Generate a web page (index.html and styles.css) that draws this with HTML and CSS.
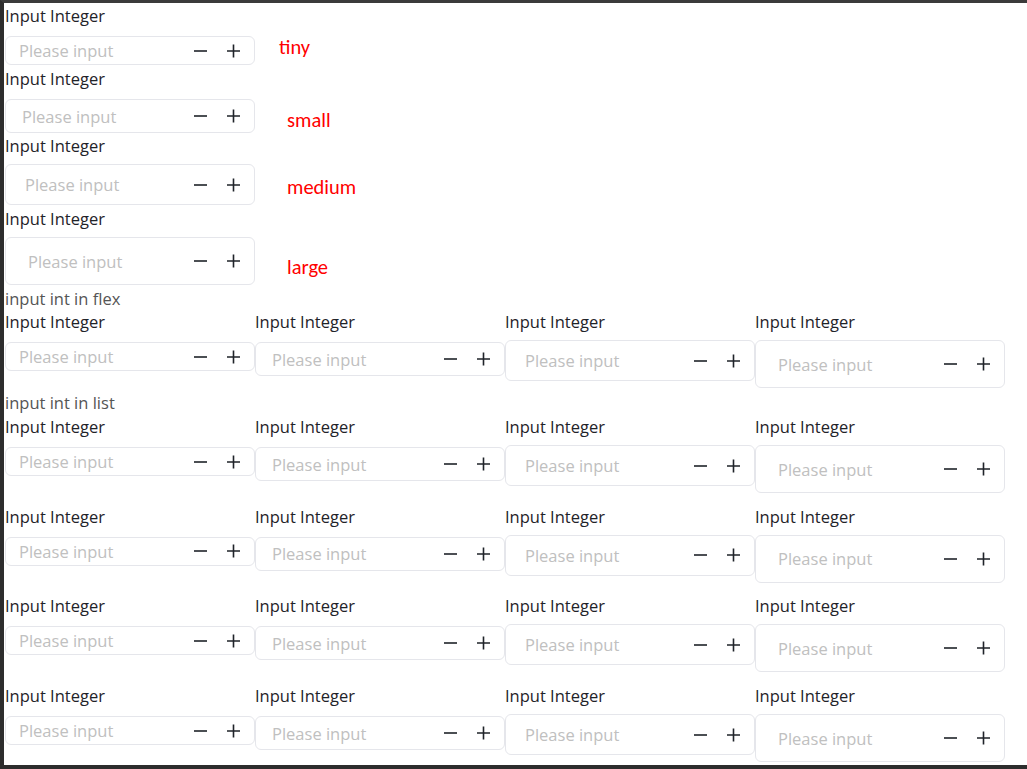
FILE: index.html
```html
<!DOCTYPE html>
<html lang="en">
<head>
    <meta charset="UTF-8">
    <meta name="viewport" content="width=device-width, initial-scale=1.0">
    <title>Input Integer</title>
    <link rel="stylesheet" href="styles.css">
</head>
<body>
<div class="page">

    <div class="stack-row first">
        <div class="field">
            <label class="field-label">Input Integer</label>
            <div class="int-input tiny">
                <input type="text" placeholder="Please input">
                <span class="steps">
                    <svg viewBox="0 0 14 14"><path d="M0.5 7h13"/></svg>
                    <svg viewBox="0 0 14 14"><path d="M7 0.5v13M0.5 7h13"/></svg>
                </span>
            </div>
        </div>
        <span class="size-note note-tiny">tiny</span>
    </div>

    <div class="stack-row second">
        <div class="field">
            <label class="field-label">Input Integer</label>
            <div class="int-input small">
                <input type="text" placeholder="Please input">
                <span class="steps">
                    <svg viewBox="0 0 14 14"><path d="M0.5 7h13"/></svg>
                    <svg viewBox="0 0 14 14"><path d="M7 0.5v13M0.5 7h13"/></svg>
                </span>
            </div>
        </div>
        <span class="size-note note-small">small</span>
    </div>

    <div class="stack-row">
        <div class="field">
            <label class="field-label">Input Integer</label>
            <div class="int-input medium">
                <input type="text" placeholder="Please input">
                <span class="steps">
                    <svg viewBox="0 0 14 14"><path d="M0.5 7h13"/></svg>
                    <svg viewBox="0 0 14 14"><path d="M7 0.5v13M0.5 7h13"/></svg>
                </span>
            </div>
        </div>
        <span class="size-note note-medium">medium</span>
    </div>

    <div class="stack-row">
        <div class="field">
            <label class="field-label">Input Integer</label>
            <div class="int-input large">
                <input type="text" placeholder="Please input">
                <span class="steps">
                    <svg viewBox="0 0 14 14"><path d="M0.5 7h13"/></svg>
                    <svg viewBox="0 0 14 14"><path d="M7 0.5v13M0.5 7h13"/></svg>
                </span>
            </div>
        </div>
        <span class="size-note note-large">large</span>
    </div>

    <div class="section-title">input int in flex</div>
    <div class="int-row flex-row">
        <div class="field">
            <label class="field-label">Input Integer</label>
            <div class="int-input tiny">
                <input type="text" placeholder="Please input">
                <span class="steps">
                    <svg viewBox="0 0 14 14"><path d="M0.5 7h13"/></svg>
                    <svg viewBox="0 0 14 14"><path d="M7 0.5v13M0.5 7h13"/></svg>
                </span>
            </div>
        </div>
        <div class="field">
            <label class="field-label">Input Integer</label>
            <div class="int-input small">
                <input type="text" placeholder="Please input">
                <span class="steps">
                    <svg viewBox="0 0 14 14"><path d="M0.5 7h13"/></svg>
                    <svg viewBox="0 0 14 14"><path d="M7 0.5v13M0.5 7h13"/></svg>
                </span>
            </div>
        </div>
        <div class="field">
            <label class="field-label">Input Integer</label>
            <div class="int-input medium">
                <input type="text" placeholder="Please input">
                <span class="steps">
                    <svg viewBox="0 0 14 14"><path d="M0.5 7h13"/></svg>
                    <svg viewBox="0 0 14 14"><path d="M7 0.5v13M0.5 7h13"/></svg>
                </span>
            </div>
        </div>
        <div class="field">
            <label class="field-label">Input Integer</label>
            <div class="int-input large">
                <input type="text" placeholder="Please input">
                <span class="steps">
                    <svg viewBox="0 0 14 14"><path d="M0.5 7h13"/></svg>
                    <svg viewBox="0 0 14 14"><path d="M7 0.5v13M0.5 7h13"/></svg>
                </span>
            </div>
        </div>
    </div>

    <div class="section-title">input int in list</div>
    <div class="int-list">
        <div class="int-row">
            <div class="field">
                <label class="field-label">Input Integer</label>
                <div class="int-input tiny">
                    <input type="text" placeholder="Please input">
                    <span class="steps">
                        <svg viewBox="0 0 14 14"><path d="M0.5 7h13"/></svg>
                        <svg viewBox="0 0 14 14"><path d="M7 0.5v13M0.5 7h13"/></svg>
                    </span>
                </div>
            </div>
            <div class="field">
                <label class="field-label">Input Integer</label>
                <div class="int-input small">
                    <input type="text" placeholder="Please input">
                    <span class="steps">
                        <svg viewBox="0 0 14 14"><path d="M0.5 7h13"/></svg>
                        <svg viewBox="0 0 14 14"><path d="M7 0.5v13M0.5 7h13"/></svg>
                    </span>
                </div>
            </div>
            <div class="field">
                <label class="field-label">Input Integer</label>
                <div class="int-input medium">
                    <input type="text" placeholder="Please input">
                    <span class="steps">
                        <svg viewBox="0 0 14 14"><path d="M0.5 7h13"/></svg>
                        <svg viewBox="0 0 14 14"><path d="M7 0.5v13M0.5 7h13"/></svg>
                    </span>
                </div>
            </div>
            <div class="field">
                <label class="field-label">Input Integer</label>
                <div class="int-input large">
                    <input type="text" placeholder="Please input">
                    <span class="steps">
                        <svg viewBox="0 0 14 14"><path d="M0.5 7h13"/></svg>
                        <svg viewBox="0 0 14 14"><path d="M7 0.5v13M0.5 7h13"/></svg>
                    </span>
                </div>
            </div>
        </div>

        <div class="int-row">
            <div class="field">
                <label class="field-label">Input Integer</label>
                <div class="int-input tiny">
                    <input type="text" placeholder="Please input">
                    <span class="steps">
                        <svg viewBox="0 0 14 14"><path d="M0.5 7h13"/></svg>
                        <svg viewBox="0 0 14 14"><path d="M7 0.5v13M0.5 7h13"/></svg>
                    </span>
                </div>
            </div>
            <div class="field">
                <label class="field-label">Input Integer</label>
                <div class="int-input small">
                    <input type="text" placeholder="Please input">
                    <span class="steps">
                        <svg viewBox="0 0 14 14"><path d="M0.5 7h13"/></svg>
                        <svg viewBox="0 0 14 14"><path d="M7 0.5v13M0.5 7h13"/></svg>
                    </span>
                </div>
            </div>
            <div class="field">
                <label class="field-label">Input Integer</label>
                <div class="int-input medium">
                    <input type="text" placeholder="Please input">
                    <span class="steps">
                        <svg viewBox="0 0 14 14"><path d="M0.5 7h13"/></svg>
                        <svg viewBox="0 0 14 14"><path d="M7 0.5v13M0.5 7h13"/></svg>
                    </span>
                </div>
            </div>
            <div class="field">
                <label class="field-label">Input Integer</label>
                <div class="int-input large">
                    <input type="text" placeholder="Please input">
                    <span class="steps">
                        <svg viewBox="0 0 14 14"><path d="M0.5 7h13"/></svg>
                        <svg viewBox="0 0 14 14"><path d="M7 0.5v13M0.5 7h13"/></svg>
                    </span>
                </div>
            </div>
        </div>

        <div class="int-row">
            <div class="field">
                <label class="field-label">Input Integer</label>
                <div class="int-input tiny">
                    <input type="text" placeholder="Please input">
                    <span class="steps">
                        <svg viewBox="0 0 14 14"><path d="M0.5 7h13"/></svg>
                        <svg viewBox="0 0 14 14"><path d="M7 0.5v13M0.5 7h13"/></svg>
                    </span>
                </div>
            </div>
            <div class="field">
                <label class="field-label">Input Integer</label>
                <div class="int-input small">
                    <input type="text" placeholder="Please input">
                    <span class="steps">
                        <svg viewBox="0 0 14 14"><path d="M0.5 7h13"/></svg>
                        <svg viewBox="0 0 14 14"><path d="M7 0.5v13M0.5 7h13"/></svg>
                    </span>
                </div>
            </div>
            <div class="field">
                <label class="field-label">Input Integer</label>
                <div class="int-input medium">
                    <input type="text" placeholder="Please input">
                    <span class="steps">
                        <svg viewBox="0 0 14 14"><path d="M0.5 7h13"/></svg>
                        <svg viewBox="0 0 14 14"><path d="M7 0.5v13M0.5 7h13"/></svg>
                    </span>
                </div>
            </div>
            <div class="field">
                <label class="field-label">Input Integer</label>
                <div class="int-input large">
                    <input type="text" placeholder="Please input">
                    <span class="steps">
                        <svg viewBox="0 0 14 14"><path d="M0.5 7h13"/></svg>
                        <svg viewBox="0 0 14 14"><path d="M7 0.5v13M0.5 7h13"/></svg>
                    </span>
                </div>
            </div>
        </div>

        <div class="int-row">
            <div class="field">
                <label class="field-label">Input Integer</label>
                <div class="int-input tiny">
                    <input type="text" placeholder="Please input">
                    <span class="steps">
                        <svg viewBox="0 0 14 14"><path d="M0.5 7h13"/></svg>
                        <svg viewBox="0 0 14 14"><path d="M7 0.5v13M0.5 7h13"/></svg>
                    </span>
                </div>
            </div>
            <div class="field">
                <label class="field-label">Input Integer</label>
                <div class="int-input small">
                    <input type="text" placeholder="Please input">
                    <span class="steps">
                        <svg viewBox="0 0 14 14"><path d="M0.5 7h13"/></svg>
                        <svg viewBox="0 0 14 14"><path d="M7 0.5v13M0.5 7h13"/></svg>
                    </span>
                </div>
            </div>
            <div class="field">
                <label class="field-label">Input Integer</label>
                <div class="int-input medium">
                    <input type="text" placeholder="Please input">
                    <span class="steps">
                        <svg viewBox="0 0 14 14"><path d="M0.5 7h13"/></svg>
                        <svg viewBox="0 0 14 14"><path d="M7 0.5v13M0.5 7h13"/></svg>
                    </span>
                </div>
            </div>
            <div class="field">
                <label class="field-label">Input Integer</label>
                <div class="int-input large">
                    <input type="text" placeholder="Please input">
                    <span class="steps">
                        <svg viewBox="0 0 14 14"><path d="M0.5 7h13"/></svg>
                        <svg viewBox="0 0 14 14"><path d="M7 0.5v13M0.5 7h13"/></svg>
                    </span>
                </div>
            </div>
        </div>
    </div>

</div>
</body>
</html>
```

FILE: styles.css
```css
body {
    margin: 0;
    font-family: "Open Sans", "Noto Sans", sans-serif;
    font-size: 16.5px;
    color: #1f2329;
    background-color: #fff;
}
.page {
    height: 769px;
    box-sizing: border-box;
    border-top: 3px solid #3b3b3b;
    border-left: 4px solid #2d2d2d;
    border-bottom: 4px solid #2d2d2d;
    padding: 1px 0 0 1px;
    overflow: hidden;
}
.field {
    width: 250px;
    display: flex;
    flex-direction: column;
}
.field-label {
    line-height: 23px;
}
.int-input {
    display: flex;
    align-items: center;
    box-sizing: border-box;
    margin-top: 9px;
    border: 1px solid #e5e6eb;
    border-radius: 6px;
    background: #fff;
    padding-right: 13px;
}
.int-input input {
    flex: 1;
    min-width: 0;
    border: none;
    outline: none;
    padding: 0;
    font-family: inherit;
    font-size: 16.5px;
    line-height: 23px;
    color: #1f2329;
    background: transparent;
}
.int-input input::placeholder {
    color: #c0c0c0;
}
.int-input.tiny {
    height: 29px;
    padding-left: 13px;
}
.int-input.small {
    height: 34px;
    padding-left: 16px;
}
.int-input.medium {
    height: 41px;
    margin-top: 7px;
    padding-left: 19px;
}
.int-input.large {
    height: 48px;
    margin-top: 7px;
    padding-left: 22px;
}
.steps {
    display: flex;
    align-items: center;
    gap: 18px;
}
.steps svg {
    width: 15px;
    height: 14px;
    fill: none;
    stroke: #1f2329;
    stroke-width: 1.6;
}

/* stacked sizes */
.stack-row {
    display: flex;
    align-items: flex-start;
    margin-bottom: 2px;
}
.stack-row.second {
    margin-bottom: 1px;
}
.size-note {
    color: #ff0000;
    font-family: Carlito, Lato, sans-serif;
    font-size: 20.5px;
    line-height: 23px;
    margin-left: 32px;
}
.note-tiny {
    margin-left: 24px;
    margin-top: 32px;
}
.note-small {
    margin-top: 42px;
}
.note-medium {
    margin-top: 42px;
}
.note-large {
    margin-top: 49px;
}

.section-title {
    color: #555;
    line-height: 23px;
}
.int-row {
    display: flex;
    align-items: flex-start;
    margin-bottom: 11.7px;
}
.flex-row {
    margin-bottom: 3px;
}
.int-list {
    padding-top: 1px;
}
```
